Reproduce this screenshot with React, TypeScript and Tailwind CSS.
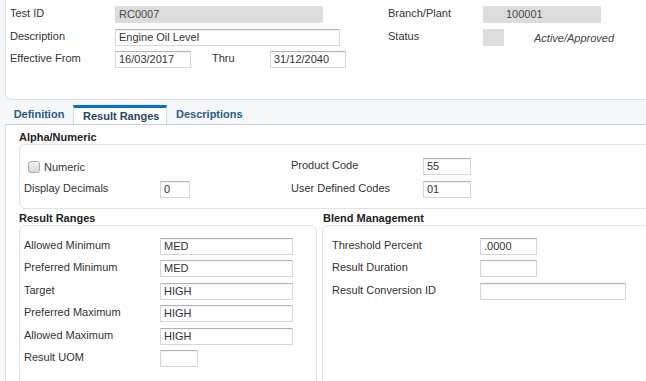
import React from "react";

function Lbl({ className = "", children }: { className?: string; children?: React.ReactNode }) {
  return <div className={"leading-[14px] shrink-0 whitespace-nowrap " + className}>{children}</div>;
}

function Inp({ className = "", children }: { className?: string; children?: React.ReactNode }) {
  return (
    <div
      className={
        "h-[17px] shrink-0 border border-[#d6d6d6] border-t-[#b3b3b3] bg-white pl-[3px] leading-[15px] text-[#333] shadow-[inset_0_1px_1px_rgba(0,0,0,0.05)] whitespace-nowrap " +
        className
      }
    >
      {children}
    </div>
  );
}

function RO({ className = "", children }: { className?: string; children?: React.ReactNode }) {
  return (
    <div className={"h-[17px] shrink-0 bg-[#dcdcdc] leading-[17px] text-[#4a4a4a] whitespace-nowrap " + className}>
      {children}
    </div>
  );
}

export default function App() {
  return (
    <div className="w-[646px] h-[381px] overflow-hidden bg-[#f6f7f8] font-['Liberation_Sans',Arial,sans-serif] text-[11px] text-[#333]">
      {/* Header panel */}
      <div className="ml-[5px] w-[700px] h-[100px] border-l border-b border-[#d8dfe5] rounded-bl-[6px] bg-white flex pt-[6px] pl-[4px]">
        <div className="w-[378px] flex flex-col gap-[5.5px]">
          <div className="flex items-start">
            <Lbl className="w-[105px]">Test ID</Lbl>
            <RO className="w-[208px] pl-[4px]">RC0007</RO>
          </div>
          <div className="flex items-start">
            <Lbl className="w-[105px]">Description</Lbl>
            <Inp className="w-[225px]">Engine Oil Level</Inp>
          </div>
          <div className="flex items-start">
            <Lbl className="w-[105px]">Effective From</Lbl>
            <Inp className="w-[76px]">16/03/2017</Inp>
            <Lbl className="ml-[21px] w-[58px]">Thru</Lbl>
            <Inp className="w-[76px]">31/12/2040</Inp>
          </div>
        </div>
        <div className="flex flex-col gap-[5.5px]">
          <div className="flex items-start">
            <Lbl className="w-[95px]">Branch/Plant</Lbl>
            <RO className="w-[118px] pl-[23px]">100001</RO>
          </div>
          <div className="flex items-start">
            <Lbl className="w-[95px]">Status</Lbl>
            <RO className="w-[21px]" />
            <Lbl className="ml-[30px] italic text-[#444] mt-[2px]">Active/Approved</Lbl>
          </div>
        </div>
      </div>

      {/* Tabs */}
      <div className="mt-[5px] ml-[5px] h-[19px] flex items-stretch font-bold">
        <div className="w-[68px] pt-[2px] text-center leading-[14px] text-[#2b5b8e]">Definition</div>
        <div className="w-[94px] border-t-[3px] border-t-[#0572ce] border-x border-x-[#d3dbe2] bg-white pt-[1px] pl-[9px] leading-[14px] text-[#2a4563]">
          Result Ranges
        </div>
        <div className="pt-[2px] pl-[9px] leading-[14px] text-[#2b5b8e]">Descriptions</div>
      </div>

      {/* Tab panel */}
      <div className="ml-[5px] w-[700px] h-[300px] border-l border-t border-l-[#dfe4e8] border-t-[#c5cfd8] bg-white pt-[5px] pl-[13px]">
        <div className="font-bold leading-[14px] text-[#222]">Alpha/Numeric</div>
        <div className="border border-[#dfe3e7] rounded-[6px] pt-[13px] pb-[10px] flex">
          <div className="w-[271px] pl-[4px] flex flex-col gap-[6px]">
            <div className="h-[17px] flex items-center">
              <div className="ml-[4px] w-[12px] h-[12px] rounded-[3px] border border-[#a9a9a9] bg-gradient-to-b from-[#f2f2f2] to-[#d9d9d9]" />
              <Lbl className="ml-[4px]">Numeric</Lbl>
            </div>
            <div className="flex items-start">
              <Lbl className="w-[136px]">Display Decimals</Lbl>
              <Inp className="w-[30px]">0</Inp>
            </div>
          </div>
          <div className="flex flex-col gap-[6px]">
            <div className="flex items-start">
              <Lbl className="w-[132px]">Product Code</Lbl>
              <Inp className="w-[48px]">55</Inp>
            </div>
            <div className="flex items-start">
              <Lbl className="w-[132px]">User Defined Codes</Lbl>
              <Inp className="w-[48px]">01</Inp>
            </div>
          </div>
        </div>

        <div className="mt-[2px] flex">
          <div className="w-[298px] shrink-0">
            <div className="font-bold leading-[14px] text-[#222]">Result Ranges</div>
            <div className="h-[200px] border border-[#dfe3e7] rounded-[6px] pt-[12px] pl-[4px] flex flex-col gap-[5.4px]">
              <div className="flex items-start">
                <Lbl className="w-[136px]">Allowed Minimum</Lbl>
                <Inp className="w-[133px]">MED</Inp>
              </div>
              <div className="flex items-start">
                <Lbl className="w-[136px]">Preferred Minimum</Lbl>
                <Inp className="w-[133px]">MED</Inp>
              </div>
              <div className="flex items-start">
                <Lbl className="w-[136px]">Target</Lbl>
                <Inp className="w-[133px]">HIGH</Inp>
              </div>
              <div className="flex items-start">
                <Lbl className="w-[136px]">Preferred Maximum</Lbl>
                <Inp className="w-[133px]">HIGH</Inp>
              </div>
              <div className="flex items-start">
                <Lbl className="w-[136px]">Allowed Maximum</Lbl>
                <Inp className="w-[133px]">HIGH</Inp>
              </div>
              <div className="flex items-start">
                <Lbl className="w-[136px]">Result UOM</Lbl>
                <Inp className="w-[38px]" />
              </div>
            </div>
          </div>
          <div className="ml-[5px] flex-1">
            <div className="ml-[1px] font-bold leading-[14px] text-[#222]">Blend Management</div>
            <div className="h-[200px] border border-[#dfe3e7] rounded-[6px] pt-[12px] pl-[9px] flex flex-col gap-[5.4px]">
              <div className="flex items-start">
                <Lbl className="w-[148px]">Threshold Percent</Lbl>
                <Inp className="w-[57px]">.0000</Inp>
              </div>
              <div className="flex items-start">
                <Lbl className="w-[148px]">Result Duration</Lbl>
                <Inp className="w-[57px]" />
              </div>
              <div className="flex items-start">
                <Lbl className="w-[148px]">Result Conversion ID</Lbl>
                <Inp className="w-[146px]" />
              </div>
            </div>
          </div>
        </div>
      </div>
    </div>
  );
}
